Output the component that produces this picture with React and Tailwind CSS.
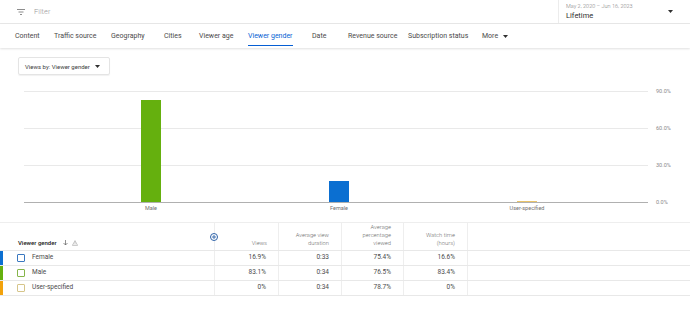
import React from "react";

const tabs = [
  { label: "Content", w: 39 },
  { label: "Traffic source", w: 57 },
  { label: "Geography", w: 53 },
  { label: "Cities", w: 35 },
  { label: "Viewer age", w: 49 },
  { label: "Viewer gender", w: 64, active: true },
  { label: "Date", w: 36 },
  { label: "Revenue source", w: 60 },
  { label: "Subscription status", w: 74 },
];

const bars = [
  { label: "Male", value: 83.1, color: "bg-[#65b00e]" },
  { label: "Female", value: 16.9, color: "bg-[#0b6fd1]" },
  { label: "User-specified", value: 0.4, color: "bg-[#e9c46a]" },
];

const rows = [
  { name: "Female", bar: "bg-[#0b6fd1]", box: "border-[#3a78c0]", views: "16.9%", dur: "0:33", pct: "75.4%", watch: "16.6%" },
  { name: "Male", bar: "bg-[#65b00e]", box: "border-[#86b54a]", views: "83.1%", dur: "0:34", pct: "76.5%", watch: "83.4%" },
  { name: "User-specified", bar: "bg-[#f2a20c]", box: "border-[#d6c58a]", views: "0%", dur: "0:34", pct: "78.7%", watch: "0%" },
];

function Caret({ className = "" }) {
  return (
    <svg width="5" height="3" viewBox="0 0 5 3" className={className}>
      <path d="M0 0h5L2.5 3z" fill="#303030" />
    </svg>
  );
}

export default function App() {
  return (
    <div className="w-[690px] h-[335px] bg-white overflow-hidden font-['Roboto',sans-serif] text-[#303030]">
      {/* Top bar */}
      <div className="flex h-[24px] border-b border-[#e8e8e8]">
        <div className="flex flex-1 items-center pl-[17px] gap-[9px]">
          <svg width="8" height="6" viewBox="0 0 8 6">
            <path d="M0 0.5h8M1.5 3h5M3 5.5h2" stroke="#707070" strokeWidth="0.8" />
          </svg>
          <span className="text-[7.5px] text-[#9a9a9a] font-light">Filter</span>
        </div>
        <div className="w-[132px] shrink-0 border-l border-[#ececec] flex items-center pl-[7px] pr-[17px]">
          <div className="flex flex-col flex-1 leading-none">
            <span className="text-[5.5px] text-[#808080] font-light">May 2, 2020 – Jun 16, 2023</span>
            <span className="text-[7.5px] mt-[3px] text-[#303030]">Lifetime</span>
          </div>
          <Caret />
        </div>
      </div>

      {/* Tabs */}
      <div className="flex h-[24px] pl-[15px] shadow-[0_1px_2px_rgba(0,0,0,0.12)]">
        {tabs.map((t) => (
          <div key={t.label} style={{ width: t.w }} className="flex shrink-0">
            <div className="relative flex items-center">
              <span className={`text-[7px] whitespace-nowrap ${t.active ? "text-[#065fd4]" : "text-[#4a4a4a]"}`}>{t.label}</span>
              {t.active && <div className="absolute left-0 right-0 bottom-[2px] h-[1.5px] bg-[#065fd4]" />}
            </div>
          </div>
        ))}
        <div className="flex items-center gap-[5px]">
          <span className="text-[7px] text-[#4a4a4a]">More</span>
          <Caret />
        </div>
      </div>

      {/* Metric select */}
      <div className="pl-[18px] pt-[9px]">
        <div className="w-[92px] h-[18px] flex items-center justify-between pl-[6px] pr-[9px] border border-[#e4e4e4] rounded-[2px] shadow-[0_1px_1px_rgba(0,0,0,0.06)]">
          <span className="text-[6px] text-[#404040] whitespace-nowrap">Views by: Viewer gender</span>
          <Caret />
        </div>
      </div>

      {/* Chart */}
      <div className="flex pl-[24px] mt-[16px]">
        <div className="relative flex-1 h-[112px]">
          <div className="flex flex-col justify-between h-full">
            <div className="border-t border-[#e9e9e9]" />
            <div className="border-t border-[#e9e9e9]" />
            <div className="border-t border-[#e9e9e9]" />
            <div className="border-t border-[#b0b0b0]" />
          </div>
          <div className="absolute left-0 top-0 h-[111px] flex pl-[33px]">
            {bars.map((b) => (
              <div key={b.label} className="relative w-[188px] flex justify-center items-end">
                <div
                  className={`${b.color} w-[20px]`}
                  style={{ height: b.value < 1 ? 1 : (b.value / 90) * 111 }}
                />
                <span className="absolute top-[113px] text-[5.5px] text-[#707070] whitespace-nowrap">{b.label}</span>
              </div>
            ))}
          </div>
        </div>
        <div className="w-[42px] shrink-0 flex flex-col justify-between h-[111px] pl-[8px] text-[5.5px] text-[#8a8a8a]">
          {["90.0%", "60.0%", "30.0%", "0.0%"].map((l) => (
            <div key={l} className="h-0 flex items-center">
              <span>{l}</span>
            </div>
          ))}
        </div>
      </div>

      {/* Table */}
      <div className="mt-[19px] border-t border-[#eeeeee]">
        <div className="grid grid-cols-[214px_64px_63px_62px_64px_1fr] h-[28px] border-b border-[#e8e8e8] text-[5.8px] text-[#707070] leading-[8px] font-light">
          <div className="relative flex items-end pb-[3px] pl-[18px] gap-[4px]">
            <span className="text-[6px] text-[#202020] font-medium">Viewer gender</span>
            <svg width="5" height="6" viewBox="0 0 5 6" className="ml-[2px] mb-[1px]">
              <path d="M2.5 0v5M0.5 3l2 2 2-2" stroke="#606060" strokeWidth="0.7" fill="none" />
            </svg>
            <svg width="6" height="6" viewBox="0 0 6 6" className="mb-[1px]">
              <path d="M3 0.6L5.6 5.4H0.4z" stroke="#a0a0a0" strokeWidth="0.6" fill="none" />
              <path d="M3 2.2v1.7M3 4.4v0.4" stroke="#a0a0a0" strokeWidth="0.6" />
            </svg>
            <div className="absolute right-[-4px] top-[10px] w-[8px] h-[8px] rounded-full border border-[#2e62a8] bg-white flex items-center justify-center">
              <svg width="4" height="4" viewBox="0 0 4 4">
                <path d="M2 0v4M0 2h4" stroke="#2e62a8" strokeWidth="0.9" />
              </svg>
            </div>
          </div>
          <div className="flex items-end justify-end text-right pb-[3px] pr-[11px] border-l border-[#eeeeee]">Views</div>
          <div className="flex items-end justify-end text-right pb-[3px] pr-[12px] border-l border-[#eeeeee]">
            Average view<br />duration
          </div>
          <div className="flex items-end justify-end text-right pb-[3px] pr-[12px] border-l border-[#eeeeee]">
            Average<br />percentage<br />viewed
          </div>
          <div className="flex items-end justify-end text-right pb-[3px] pr-[12px] border-l border-[#eeeeee]">
            Watch time<br />(hours)
          </div>
          <div className="border-l border-[#eeeeee]" />
        </div>
        {rows.map((r) => (
          <div
            key={r.name}
            className="grid grid-cols-[214px_64px_63px_62px_64px_1fr] h-[15px] border-b border-[#e8e8e8] text-[6.5px] text-[#4a4a4a]"
          >
            <div className="flex items-center">
              <div className={`${r.bar} w-[3px] h-full`} />
              <div className={`w-[8px] h-[8px] border ${r.box} rounded-[1px] ml-[14px]`} />
              <span className="ml-[7px]">{r.name}</span>
            </div>
            <div className="flex items-center justify-end pr-[12px] border-l border-[#eeeeee]">{r.views}</div>
            <div className="flex items-center justify-end pr-[12px] border-l border-[#eeeeee]">{r.dur}</div>
            <div className="flex items-center justify-end pr-[12px] border-l border-[#eeeeee]">{r.pct}</div>
            <div className="flex items-center justify-end pr-[12px] border-l border-[#eeeeee]">{r.watch}</div>
            <div className="border-l border-[#eeeeee]" />
          </div>
        ))}
      </div>
    </div>
  );
}
